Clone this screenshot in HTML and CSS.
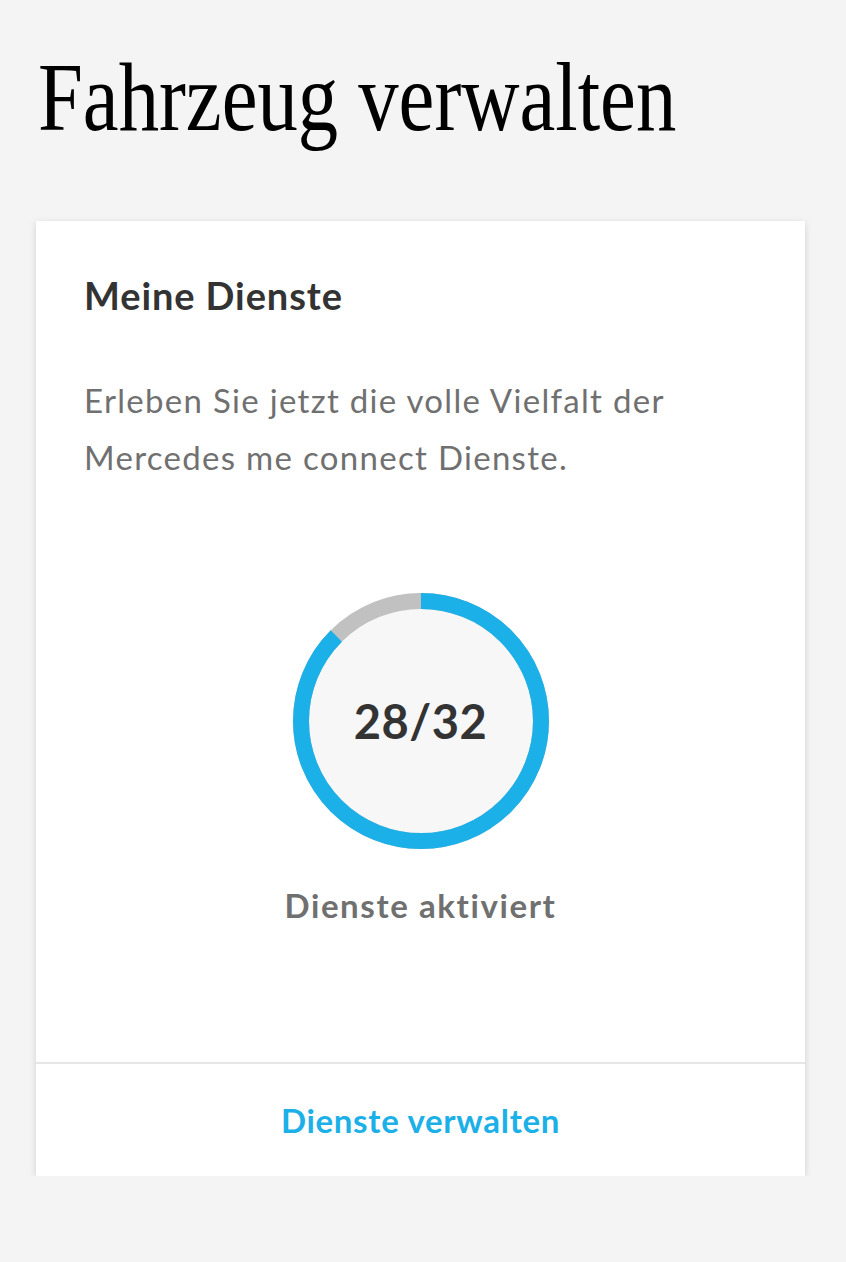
FILE: index.html
```html
<!DOCTYPE html>
<html lang="de">
<head>
<meta charset="utf-8">
<title>Fahrzeug verwalten</title>
<link rel="stylesheet" href="styles.css">
</head>
<body>
<main class="page">
  <h1 class="title"><span class="title-text">Fahrzeug verwalten</span></h1>
  <section class="card">
    <div class="card-body">
      <h2 class="card-title">Meine Dienste</h2>
      <p class="card-text">Erleben Sie jetzt die volle Vielfalt der Mercedes me connect Dienste.</p>
      <div class="gauge">
        <svg class="gauge-ring" width="256" height="256" viewBox="0 0 256 256">
          <circle cx="128" cy="128" r="120" fill="#f7f7f7" stroke="#c1c1c1" stroke-width="16"/>
          <circle cx="128" cy="128" r="120" fill="none" stroke="#1cb0e8" stroke-width="16"
                  stroke-dasharray="659.73 1000" transform="rotate(-90 128 128)"/>
        </svg>
        <div class="gauge-value">28/32</div>
      </div>
      <p class="gauge-label">Dienste aktiviert</p>
    </div>
    <div class="card-footer">
      <a class="card-link" href="#">Dienste verwalten</a>
    </div>
  </section>
</main>
</body>
</html>
```

FILE: styles.css
```css
html, body {
  margin: 0;
  padding: 0;
}
body {
  background: #f4f4f4;
  font-family: "Lato", "Open Sans", sans-serif;
}
.page {
  padding: 42px 41px 0 36px;
}
.title {
  margin: 0;
  font-family: "Liberation Serif", serif;
  font-weight: 400;
  font-size: 98px;
  line-height: 110px;
  color: #000;
  white-space: nowrap;
}
.title-text {
  display: inline-block;
  transform: scaleX(0.823);
  transform-origin: 0 50%;
  margin-left: 2px;
}
.card {
  margin-top: 69px;
  background: #fff;
  box-shadow: 0 2px 7px rgba(0, 0, 0, 0.14);
}
.card-body {
  padding: 50px 48px 0 48px;
  display: flex;
  flex-direction: column;
}
.card-title {
  margin: 0;
  font-size: 38px;
  line-height: 48px;
  font-weight: 700;
  color: #333;
  letter-spacing: 0.9px;
}
.card-text {
  margin: 53px 0 0 0;
  font-size: 33px;
  line-height: 57px;
  color: #707070;
  letter-spacing: 1.3px;
  max-width: 640px;
}
.gauge {
  margin-top: 107px;
  align-self: center;
  display: grid;
  width: 256px;
  height: 256px;
}
.gauge-ring, .gauge-value {
  grid-area: 1 / 1;
}
.gauge-value {
  place-self: center;
  font-size: 47px;
  font-weight: 700;
  color: #333;
  letter-spacing: 0.5px;
}
.gauge-label {
  margin: 32px 0 0 0;
  text-align: center;
  font-size: 33px;
  line-height: 48px;
  font-weight: 700;
  color: #707070;
  letter-spacing: 1.6px;
  padding-bottom: 133px;
}
.card-footer {
  border-top: 2px solid #e6e6e6;
  height: 112px;
  display: flex;
  align-items: center;
  justify-content: center;
}
.card-link {
  font-size: 33px;
  font-weight: 700;
  color: #1cb0e8;
  letter-spacing: 0.7px;
  text-decoration: none;
}
```
